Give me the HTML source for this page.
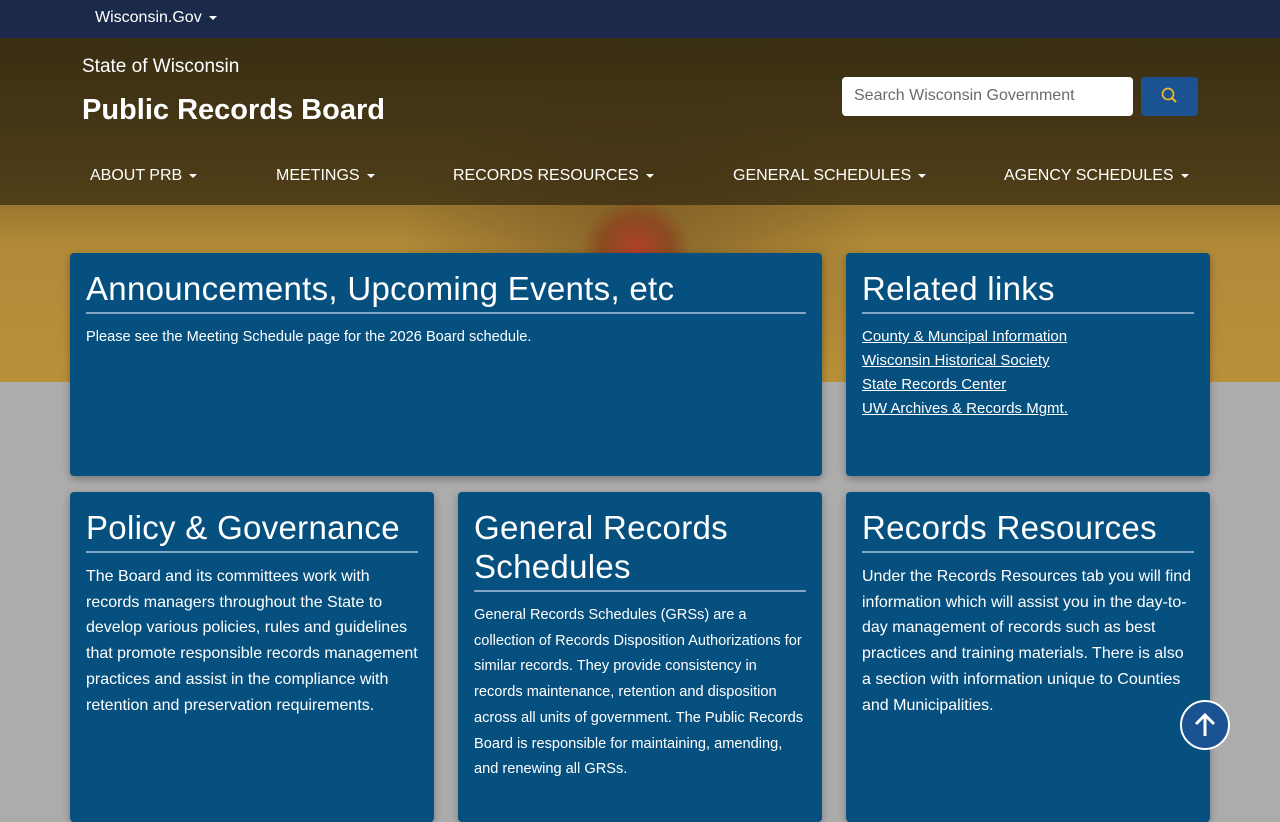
<!DOCTYPE html>
<html><head><meta charset="utf-8"><style>
*{box-sizing:border-box;margin:0;padding:0}
body{width:1280px;height:800px;overflow:hidden;background:#acacac;font-family:"Liberation Sans",sans-serif;color:#fff;position:relative}
.top{position:absolute;left:0;top:0;width:1280px;height:38px;background:#1b2a4b}
.top span{position:absolute;left:95px;top:9px;font-size:16px}
.caret{display:inline-block;width:0;height:0;border-left:4px solid transparent;border-right:4px solid transparent;border-top:4px solid #fff;vertical-align:middle;margin-left:7px}
.hero{position:absolute;left:0;top:38px;width:1280px;height:344px;
background:
radial-gradient(ellipse 55px 50px at 636px 210px,#b0402a 0%,#8a4a20 60%,transparent 100%),
radial-gradient(ellipse 300px 240px at 636px 230px,rgba(90,60,25,.5),transparent 80%),
linear-gradient(180deg,#5a4a20 0%,#8a6a28 40%,#b08a38 60%,#b8903a 100%)}
.dark{position:absolute;left:0;top:38px;width:1280px;height:167px;background:rgba(35,28,12,.6)}
.state{position:absolute;left:82px;top:56px;font-size:19px}
.title{position:absolute;left:82px;top:94px;font-size:29px;font-weight:bold}
.search{position:absolute;left:842px;top:77px;width:291px;height:39px;background:#fff;border-radius:4px;color:#6b6b6b;font-size:16px;padding:10px 12px}
.sbtn{position:absolute;left:1141px;top:77px;width:57px;height:39px;background:#1b5291;border-radius:4px}
.nav{position:absolute;top:167px;font-size:16px}
.card{position:absolute;background:#06507f;border-radius:4px;box-shadow:0 3px 8px rgba(0,0,0,.3);padding:16px 16px}
.card h2{font-weight:normal;font-size:33px;line-height:39px;padding-bottom:4px;border-bottom:2px solid #7fa6c8;margin-bottom:11px;letter-spacing:.3px}
.card p{font-size:16px;line-height:25.7px}
.card.sm p{font-size:14.6px;line-height:25.7px}
.card a{color:#fff;display:block;font-size:15px;line-height:24px}
.up{position:absolute;left:1180px;top:700px;width:50px;height:50px;border-radius:50%;background:#1b5291;border:2px solid #fff}
</style></head><body>
<div class="top"><span>Wisconsin.Gov<i class="caret"></i></span></div>
<div class="hero"></div><div class="dark"></div>
<div class="state">State of Wisconsin</div>
<div class="title">Public Records Board</div>
<div class="search">Search Wisconsin Government</div>
<div class="sbtn"><svg width="57" height="39"><circle cx="27" cy="17" r="5.5" fill="none" stroke="#e8b630" stroke-width="1.8"/><line x1="31" y1="21" x2="35" y2="25" stroke="#e8b630" stroke-width="2"/></svg></div>
<div class="nav" style="left:90px">ABOUT PRB<i class="caret"></i></div>
<div class="nav" style="left:276px">MEETINGS<i class="caret"></i></div>
<div class="nav" style="left:453px">RECORDS RESOURCES<i class="caret"></i></div>
<div class="nav" style="left:733px">GENERAL SCHEDULES<i class="caret"></i></div>
<div class="nav" style="left:1004px">AGENCY SCHEDULES<i class="caret"></i></div>

<div class="card sm" style="left:70px;top:253px;width:752px;height:223px"><h2>Announcements, Upcoming Events, etc</h2><p>Please see the Meeting Schedule page for the 2026 Board schedule.</p></div>
<div class="card" style="left:846px;top:253px;width:364px;height:223px"><h2>Related links</h2>
<a href="#"><u>County &amp; Muncipal Information</u></a><a href="#"><u>Wisconsin Historical Society</u></a><a href="#"><u>State Records Center</u></a><a href="#"><u>UW Archives &amp; Records Mgmt</u>.</a></div>

<div class="card" style="left:70px;top:492px;width:364px;height:330px"><h2>Policy &amp; Governance</h2><p>The Board and its committees work with records managers throughout the State to develop various policies, rules and guidelines that promote responsible records management practices and assist in the compliance with retention and preservation requirements.</p></div>
<div class="card sm" style="left:458px;top:492px;width:364px;height:330px"><h2>General Records Schedules</h2><p>General Records Schedules (GRSs) are a collection of Records Disposition Authorizations for similar records. They provide consistency in records maintenance, retention and disposition across all units of government. The Public Records Board is responsible for maintaining, amending, and renewing all GRSs.</p></div>
<div class="card" style="left:846px;top:492px;width:364px;height:330px"><h2>Records Resources</h2><p>Under the Records Resources tab you will find information which will assist you in the day-to-day management of records such as best practices and training materials. There is also a section with information unique to Counties and Municipalities.</p></div>
<div class="up"><svg width="46" height="46"><path d="M23 34V13M14 22l9-9 9 9" fill="none" stroke="#fff" stroke-width="3"/></svg></div>
</body></html>
